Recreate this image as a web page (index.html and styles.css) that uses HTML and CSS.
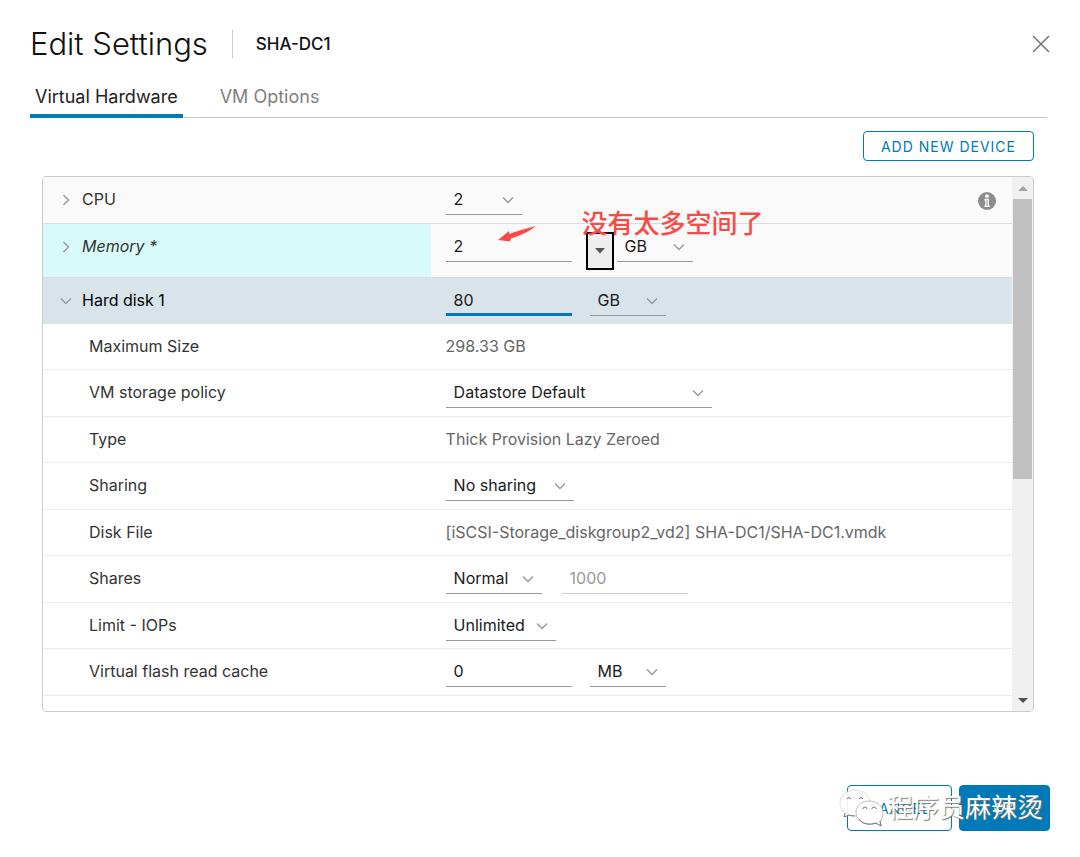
FILE: index.html
```html
<!DOCTYPE html>
<html lang="en">
<head>
    <meta charset="UTF-8">
    <meta name="viewport" content="width=device-width, initial-scale=1.0">
    <title>Edit Settings</title>
    <link rel="stylesheet" href="styles.css">
</head>
<body>
    <!-- Shared chevron -->
    <svg class="sprite" aria-hidden="true">
        <symbol id="chevron" viewBox="0 0 12 12">
            <path d="M1 3.5 L6 8.5 L11 3.5" fill="none" stroke="currentColor" stroke-width="1.4"/>
        </symbol>
    </svg>

    <div class="dialog">
        <!-- Header -->
        <header class="header">
            <h1>Edit Settings</h1>
            <span class="vm-name">SHA-DC1</span>
            <button class="close" aria-label="Close">
                <svg width="18" height="18" viewBox="0 0 18 18"><path d="M1 1 L17 17 M17 1 L1 17" stroke="#737373" stroke-width="1.5" fill="none"/></svg>
            </button>
        </header>

        <!-- Tabs -->
        <nav class="tabs">
            <button class="tab active">Virtual Hardware</button>
            <button class="tab">VM Options</button>
        </nav>

        <div class="toolbar">
            <button class="btn btn-small">ADD NEW DEVICE</button>
        </div>

        <!-- Hardware list -->
        <div class="panel">
            <div class="list">
                <div class="row device cpu">
                    <div class="name">
                        <button class="toggle" aria-label="Expand CPU"><svg class="right"><use href="#chevron"/></svg></button>
                        <label for="cpu">CPU</label>
                    </div>
                    <div class="value">
                        <div class="select"><select id="cpu"><option>2</option></select><svg><use href="#chevron"/></svg></div>
                        <button class="info" aria-label="CPU info">
                            <svg width="18" height="18" viewBox="0 0 18 18">
                                <circle cx="9" cy="9" r="9" fill="#8c8c8c"/>
                                <rect x="7.2" y="2.6" width="3.6" height="3.2" rx="1.4" fill="#fff"/>
                                <path d="M6.4 6.8 H10.9 V13.4 H11.8 V15 H6.4 V13.4 H7.3 V8.4 H6.4 Z" fill="#fff"/>
                                <path d="M9.1 8 V14" stroke="#8c8c8c" stroke-width="0.9"/>
                            </svg>
                        </button>
                    </div>
                </div>
                <div class="row device memory">
                    <div class="name changed">
                        <button class="toggle" aria-label="Expand Memory"><svg class="right"><use href="#chevron"/></svg></button>
                        <label for="memory">Memory *</label>
                    </div>
                    <div class="value">
                        <input class="field" id="memory" type="text" value="2">
                        <button class="drop" aria-label="Memory sizes"><svg width="10" height="6" viewBox="0 0 10 6"><path d="M0 0 H10 L5 5.5 Z" fill="#555"/></svg></button>
                        <div class="select"><select aria-label="Memory unit"><option>GB</option></select><svg><use href="#chevron"/></svg></div>
                        <svg class="arrow" width="38" height="18" viewBox="0 0 38 18"><path d="M38 0 L23 4 L11 8 L11 5 L0 14 L12 15.5 L13 12.5 Q28 8 38 0 Z" fill="#fa4a45"/></svg>
                        <span class="note">没有太多空间了</span>
                    </div>
                </div>
                <div class="row device open">
                    <div class="name">
                        <button class="toggle" aria-label="Collapse Hard disk 1"><svg><use href="#chevron"/></svg></button>
                        <label for="disk">Hard disk 1</label>
                    </div>
                    <div class="value">
                        <input class="field focused" id="disk" type="text" value="80">
                        <div class="select unit"><select aria-label="Disk unit"><option>GB</option></select><svg><use href="#chevron"/></svg></div>
                    </div>
                </div>

                <div class="details">
                    <div class="row">
                        <div class="name">Maximum Size</div>
                        <div class="value">298.33 GB</div>
                    </div>
                    <div class="row">
                        <label class="name" for="policy">VM storage policy</label>
                        <div class="value">
                            <div class="select wide"><select id="policy"><option>Datastore Default</option></select><svg><use href="#chevron"/></svg></div>
                        </div>
                    </div>
                    <div class="row">
                        <div class="name">Type</div>
                        <div class="value">Thick Provision Lazy Zeroed</div>
                    </div>
                    <div class="row">
                        <label class="name" for="sharing">Sharing</label>
                        <div class="value">
                            <div class="select sharing"><select id="sharing"><option>No sharing</option></select><svg><use href="#chevron"/></svg></div>
                        </div>
                    </div>
                    <div class="row">
                        <div class="name">Disk File</div>
                        <div class="value">[iSCSI-Storage_diskgroup2_vd2] SHA-DC1/SHA-DC1.vmdk</div>
                    </div>
                    <div class="row">
                        <label class="name" for="shares">Shares</label>
                        <div class="value">
                            <div class="select shares"><select id="shares"><option>Normal</option></select><svg><use href="#chevron"/></svg></div>
                            <input class="field shares-value" type="text" value="1000" aria-label="Shares value" disabled>
                        </div>
                    </div>
                    <div class="row">
                        <label class="name" for="limit">Limit - IOPs</label>
                        <div class="value">
                            <div class="select limit"><select id="limit"><option>Unlimited</option></select><svg><use href="#chevron"/></svg></div>
                        </div>
                    </div>
                    <div class="row">
                        <label class="name" for="cache">Virtual flash read cache</label>
                        <div class="value">
                            <input class="field" id="cache" type="text" value="0">
                            <div class="select unit"><select aria-label="Cache unit"><option>MB</option></select><svg><use href="#chevron"/></svg></div>
                        </div>
                    </div>
                </div>
            </div>
            <div class="scrollbar">
                <svg width="10" height="5" viewBox="0 0 10 5"><path d="M0 5 H10 L5 0 Z" fill="#a3a3a3"/></svg>
                <div class="track"><div class="thumb"></div></div>
                <svg width="10" height="5" viewBox="0 0 10 5"><path d="M0 0 H10 L5 5 Z" fill="#505050"/></svg>
            </div>
        </div>

        <!-- Footer -->
        <footer class="footer">
            <button class="btn cancel">CANCEL</button>
            <button class="btn primary">OK</button>
            <div class="watermark">
                <svg width="46" height="38" viewBox="0 0 46 38">
                    <path d="M16 1 C7 1 1 7 1 14 C1 18 3 21 6 24 L5 28 L10 26 C12 27 14 27 17 27 C26 27 31 21 31 14 C31 7 25 1 16 1 Z" fill="#fff" fill-opacity="0.9" stroke="#d4d4d4" stroke-width="0.8"/>
                    <path d="M6 24 L5 28 L10 26 Q13 27 16 27" fill="none" stroke="#777" stroke-width="1"/>
                    <path d="M8 10 a2.2 2.2 0 0 1 4 0 M20 10 a2.2 2.2 0 0 1 4 0" fill="none" stroke="#668" stroke-width="1"/>
                    <path d="M30 12 C22 12 17 17 17 23 C17 30 23 35 30 35 C33 35 35 35 37 34 L42 37 L41 32 C43 30 44 27 44 24 C44 17 38 12 30 12 Z" fill="#fff" fill-opacity="0.92" stroke="#aaa" stroke-width="0.8"/>
                    <path d="M20 30 C24 36 32 36 37 34 L42 37 L41 32" fill="none" stroke="#777" stroke-width="1"/>
                    <path d="M24 20 a2 2 0 0 1 4 0 M33 20 a2 2 0 0 1 4 0" fill="none" stroke="#777" stroke-width="1"/>
                </svg>
                <span>程序员麻辣烫</span>
            </div>
        </footer>
    </div>
</body>
</html>
```

FILE: styles.css
```css
* {
    box-sizing: border-box;
}
body {
    margin: 0;
    background-color: #fff;
    color: #333;
    font-family: Inter, "Noto Sans CJK SC", sans-serif;
    font-size: 16px;
}
button, input, select {
    font: inherit;
    color: inherit;
    margin: 0;
    padding: 0;
    border: none;
    border-radius: 0;
    background: none;
}
button {
    cursor: pointer;
}
.sprite {
    display: none;
}
.dialog {
    display: flex;
    flex-direction: column;
    height: 100vh;
    padding: 24px 30px 26px;
}

/* header */
.header {
    display: flex;
    align-items: center;
    height: 39px;
}
h1 {
    margin: 0;
    padding-right: 24px;
    color: #111;
    font-size: 31px;
    font-weight: 300;
    line-height: 36px;
}
.vm-name {
    padding-left: 23px;
    border-left: 1px solid #ccc;
    color: #111;
    font-size: 17px;
    font-weight: 500;
    line-height: 28px;
}
.close {
    display: flex;
    margin-left: auto;
}

/* tabs */
.tabs {
    display: flex;
    gap: 32px;
    height: 55px;
    margin-right: 3px;
    border-bottom: 1px solid #c8c8c8;
}
.tab {
    padding: 16px 5px 0;
    margin-bottom: -1px;
    border-bottom: 4px solid transparent;
    color: #808080;
    font-size: 18px;
    line-height: 36px;
}
.tab.active {
    border-bottom-color: #0079b8;
    color: #222;
}

.toolbar {
    display: flex;
    justify-content: flex-end;
    padding: 13px 16px 15px;
}
.btn {
    border: 1px solid #0079b8;
    border-radius: 4px;
    color: #0079b8;
    font-size: 14px;
    letter-spacing: 1px;
}
.btn-small {
    height: 30px;
    padding: 0 17px;
}

/* hardware list */
.panel {
    display: flex;
    flex: 1;
    min-height: 0;
    margin: 0 16px 0 12px;
    border: 1px solid #ccc;
    border-radius: 4px;
    overflow: hidden;
}
.list {
    flex: 1;
    overflow: hidden;
}
.row {
    display: grid;
    grid-template-columns: 40% 1fr;
    height: 46px;
    border-bottom: 1px solid #ebebeb;
    line-height: 28px;
}
.device {
    background-color: #fafafa;
    border-bottom-color: #ddd;
}
.cpu {
    height: 47px;
}
.memory {
    height: 54px;
}
.open {
    background-color: #d9e4ea;
    border-bottom: none;
    color: #000;
}
.details .row:nth-child(even) {
    height: 47px;
}
.name {
    display: flex;
    align-items: flex-start;
    padding: 8px 0 0 46px;
}
.device .name {
    padding-left: 17px;
}
.name.changed {
    background-color: #d9fafa;
    font-style: italic;
}
.toggle {
    display: flex;
    align-items: center;
    width: 22px;
    height: 30px;
    color: #999;
}
.toggle svg, .select svg {
    width: 12px;
    height: 12px;
}
.toggle .right {
    transform: rotate(-90deg);
}
.value {
    display: flex;
    align-items: flex-start;
    position: relative;
    padding: 8px 0 0 15px;
    color: #666;
}

/* fields */
.field {
    width: 126px;
    height: 30px;
    padding: 0 8px 2px;
    border-bottom: 1px solid #999;
    color: #1a1a1a;
}
.field.focused {
    border-bottom: 3px solid #0079b8;
    padding-bottom: 0;
}
.field:disabled {
    border-bottom-color: #ccc;
    color: #999;
}
.select {
    display: grid;
    align-items: center;
    width: 76px;
    height: 30px;
    border-bottom: 1px solid #999;
    color: #1a1a1a;
}
.select select {
    grid-area: 1 / 1;
    width: 100%;
    height: 29px;
    padding: 0 24px 2px 8px;
    appearance: none;
}
.select svg {
    grid-area: 1 / 1;
    justify-self: end;
    margin-right: 8px;
    color: #999;
    pointer-events: none;
}
.select.unit {
    margin-left: 18px;
}
.select.wide {
    width: 266px;
}
.select.sharing {
    width: 128px;
}
.select.shares {
    width: 96px;
}
.select.limit {
    width: 110px;
}
.shares-value {
    margin-left: 20px;
}
.info {
    display: flex;
    margin: 7px 16px 0 auto;
}
.drop {
    display: flex;
    align-items: center;
    justify-content: center;
    width: 28px;
    height: 38px;
    margin: 0 3px 0 14px;
    border: 2px solid #000;
    background-color: #eee;
}

/* red annotation over the memory row */
.note {
    position: absolute;
    left: 151px;
    top: -19px;
    color: #fa4a45;
    font-size: 26px;
    font-weight: 500;
    line-height: 38px;
    white-space: nowrap;
}
.arrow {
    position: absolute;
    left: 67px;
    top: 2px;
}

/* scrollbar */
.scrollbar {
    display: flex;
    flex-direction: column;
    align-items: center;
    width: 21px;
    padding: 9px 0 8px;
    background-color: #f0f0f0;
}
.track {
    flex: 1;
    width: 19px;
    margin: 8px 0;
}
.thumb {
    height: 57%;
    background-color: #c0c0c0;
}

/* footer */
.footer {
    display: flex;
    justify-content: flex-end;
    gap: 7px;
    position: relative;
    margin-top: 73px;
}
.footer .btn {
    height: 46px;
}
.cancel {
    width: 105px;
}
.primary {
    width: 91px;
    background-color: #0079b8;
    color: #fff;
}
.watermark {
    display: flex;
    align-items: center;
    gap: 2px;
    position: absolute;
    right: 7px;
    top: 4px;
    color: #fff;
    font-size: 26px;
    line-height: 38px;
    text-shadow: 1px 1px 1px #777;
    white-space: nowrap;
    pointer-events: none;
}
```
